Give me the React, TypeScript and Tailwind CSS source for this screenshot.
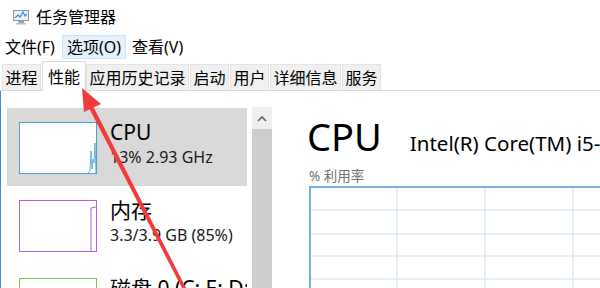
import type { ReactNode } from 'react'

const FONT = { fontFamily: '"Noto Sans", "Noto Sans CJK SC", sans-serif' }

const TABS = ['进程', '性能', '应用历史记录', '启动', '用户', '详细信息', '服务']

function AppIcon() {
  return (
    <svg width="18" height="16" viewBox="0 0 18 16">
      <rect x="1.5" y="1.5" width="15" height="10" fill="#e8f1f8" stroke="#8a9aa8" />
      <polyline points="3,9 6,6 8,8 11,3 13,7 15,5" fill="none" stroke="#3d8fd1" strokeWidth="1.2" />
      <rect x="6" y="12" width="6" height="2" fill="#9aa6b0" />
      <rect x="4" y="14" width="10" height="1.5" fill="#b8c0c8" />
    </svg>
  )
}

function Thumb({ color, children }: { color: string; children?: ReactNode }) {
  return (
    <div className="relative w-[78px] h-[52px] bg-white border shrink-0" style={{ borderColor: color }}>
      {children}
    </div>
  )
}

function Item({ selected, thumb, title, sub }: { selected?: boolean; thumb: ReactNode; title: string; sub?: string }) {
  return (
    <div className={`flex h-[78px] pl-[12px] pt-[14px] gap-[13px] ${selected ? 'bg-[#d9d9d9]' : ''}`}>
      {thumb}
      <div className="flex flex-col -mt-[4px]">
        <span className="text-[21px] leading-[28px] text-black whitespace-nowrap">{title}</span>
        {sub && <span className="text-[16px] leading-[20px] text-[#1a1a1a] mt-[1px] whitespace-nowrap">{sub}</span>}
      </div>
    </div>
  )
}

export default function App() {
  return (
    <div className="relative w-[600px] h-[288px] overflow-hidden bg-white" style={FONT}>
      {/* title bar */}
      <div className="h-[33px] flex items-center pl-[12px] gap-[6px]">
        <AppIcon />
        <span className="text-[16px] text-black">任务管理器</span>
      </div>

      {/* menu bar */}
      <div className="h-[28px] flex items-center text-[16px] text-black">
        <span className="px-[5px] h-[24px] flex items-center">文件(F)</span>
        <span className="px-[4px] h-[24px] flex items-center bg-[#e5f1fb] border border-[#cce4f7] ml-[2px]">选项(O)</span>
        <span className="px-[6px] h-[24px] flex items-center">查看(V)</span>
      </div>

      {/* tabs */}
      <div className="h-[30px] flex items-end border-b border-[#d9d9d9] pl-[2px] text-[16px] text-black">
        {TABS.map((t) =>
          t === '性能' ? (
            <span key={t} className="h-[30px] -mb-px px-[5px] flex items-center bg-white border border-b-0 border-[#d9d9d9]">
              {t}
            </span>
          ) : (
            <span key={t} className="h-[26px] px-[2.5px] flex items-center bg-[#f0f0f0] border-t border-l border-r border-[#e3e3e3] mr-px">
              {t}
            </span>
          )
        )}
      </div>

      {/* content */}
      <div className="flex h-[197px] border-l border-[#3c8fd6]">
        <div className="w-[246px] pl-[6px] pt-[17px] overflow-hidden shrink-0">
          <Item
            selected
            title="CPU"
            sub="13%  2.93 GHz"
            thumb={
              <Thumb color="#4a9ed6">
                <svg className="absolute inset-0" width="76" height="50" viewBox="0 0 76 50">
                  <polyline points="68,50 70,48 71,28 72,46 73,36 74,40 75,20 76,50" fill="none" stroke="#4a9ed6" strokeWidth="0.8" />
                </svg>
              </Thumb>
            }
          />
          <Item
            title="内存"
            sub="3.3/3.9 GB (85%)"
            thumb={
              <Thumb color="#b15fd1">
                <svg className="absolute inset-0" width="76" height="50" viewBox="0 0 76 50">
                  <polyline points="71,50 71,7 76,6" fill="none" stroke="#b15fd1" strokeWidth="1" />
                </svg>
              </Thumb>
            }
          />
          <Item title="磁盘 0 (C: E: D:" thumb={<Thumb color="#7cc35b" />} />
        </div>

        {/* scrollbar */}
        <div className="w-[20px] ml-[5px] pt-[16px] shrink-0 flex flex-col">
          <div className="h-[22px] bg-[#f0f0f0] flex items-center justify-center">
            <svg width="10" height="7" viewBox="0 0 10 7">
              <polyline points="1,6 5,2 9,6" fill="none" stroke="#606060" strokeWidth="1.6" />
            </svg>
          </div>
          <div className="flex-1 bg-[#cdcdcd]" />
        </div>

        {/* detail */}
        <div className="flex-1 pl-[35px] pt-[22px] overflow-hidden">
          <div className="flex items-baseline whitespace-nowrap">
            <span className="text-[38px] leading-[46px] text-black">CPU</span>
            <span className="ml-[28px] text-[20.5px] text-black">Intel(R) Core(TM) i5-7400 CPU</span>
          </div>
          <div className="pl-[2px] mt-[9px] text-[13.5px] leading-[17px] text-[#707070]">% 利用率</div>
          <div className="ml-[2px] mt-[1px] w-[320px] h-[120px] border-t-2 border-l-2 border-[#74b1e0] relative">
            <svg className="absolute inset-0" width="320" height="120">
              {[86, 174, 262].map((x) => (
                <line key={x} x1={x} y1="0" x2={x} y2="120" stroke="#dce9f5" strokeWidth="1.5" />
              ))}
              {[22, 46, 68, 91].map((y) => (
                <line key={y} x1="0" y1={y} x2="320" y2={y} stroke="#dce9f5" strokeWidth="1.5" />
              ))}
            </svg>
          </div>
        </div>
      </div>

      {/* annotation arrow */}
      <svg className="absolute inset-0 pointer-events-none" width="600" height="288" viewBox="0 0 600 288">
        <polygon points="93,106 186,288 182,288 89,108" fill="#f03c3c" />
        <polygon points="82,88 101,104 84,112" fill="#f03c3c" />
      </svg>
    </div>
  )
}
